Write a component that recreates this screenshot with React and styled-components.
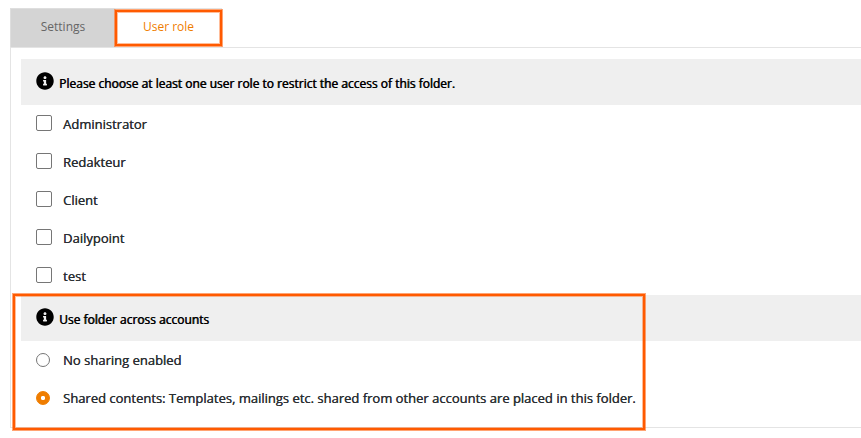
import styled, { createGlobalStyle } from 'styled-components';
import { FaInfoCircle } from 'react-icons/fa';

const roles = ['Administrator', 'Redakteur', 'Client', 'Dailypoint', 'test'];

const sharingOptions = [
  { label: 'No sharing enabled', checked: false },
  {
    label:
      'Shared contents: Templates, mailings etc. shared from other accounts are placed in this folder.',
    checked: true,
  },
];

function App() {
  return (
    <>
      <GlobalStyle />
      <StyledPage>
        <StyledTabs>
          <StyledTab>Settings</StyledTab>
          <StyledTab $active>
            User role
            <StyledTabMarker />
          </StyledTab>
        </StyledTabs>
        <StyledPanel>
          <StyledHeading>
            <FaInfoCircle size={18} />
            <StyledHeadingText>
              Please choose at least one user role to restrict the access of this folder.
            </StyledHeadingText>
          </StyledHeading>
          {roles.map((role) => (
            <StyledRow key={role}>
              <StyledCheckbox type="checkbox" />
              <StyledLabel>{role}</StyledLabel>
            </StyledRow>
          ))}
          <StyledSection>
            <StyledHeading>
              <FaInfoCircle size={18} />
              <StyledHeadingText>Use folder across accounts</StyledHeadingText>
            </StyledHeading>
            {sharingOptions.map(({ label, checked }) => (
              <StyledRow key={label}>
                <StyledRadio type="radio" name="sharing" defaultChecked={checked} />
                <StyledLabel>{label}</StyledLabel>
              </StyledRow>
            ))}
            <StyledSectionMarker />
          </StyledSection>
        </StyledPanel>
      </StyledPage>
    </>
  );
}

export default App;

const GlobalStyle = createGlobalStyle`
  * {
    box-sizing: border-box;
  }

  body {
    margin: 0;
    background: #fff;
    font-family: 'Open Sans', sans-serif;
  }
`;

const StyledPage = styled.main`
  min-height: 438px;
  padding: 8px 0 0 10px;
`;

const StyledTabs = styled.nav`
  display: flex;
  height: 39px;
`;

const StyledTab = styled.div`
  position: relative;
  width: ${(props) => (props.$active ? 107 : 105)}px;
  padding-left: ${(props) => (props.$active ? 0 : 1)}px;
  border: 1px solid ${(props) => (props.$active ? '#e4e4e4' : '#dedede')};
  border-bottom: 0;
  background: ${(props) => (props.$active ? '#fff' : '#d4d4d4')};
  color: ${(props) => (props.$active ? '#ef7d00' : '#666')};
  font-size: 12px;
  line-height: 36px;
  text-align: center;
`;

const StyledMarker = styled.div`
  position: absolute;
  border: 2px solid #ff5a00;
  box-shadow: 0 0 0 1px rgba(255, 90, 0, 0.55), inset 0 0 0 1px rgba(255, 90, 0, 0.4);
  pointer-events: none;
`;

const StyledTabMarker = styled(StyledMarker)`
  top: 1px;
  left: -1px;
  width: 107px;
  height: 36px;
`;

const StyledPanel = styled.section`
  height: 381px;
  padding: 11px 0 10px 10px;
  border: 1px solid #e4e4e4;
  border-right: 0;
`;

const StyledSection = styled.div`
  position: relative;
`;

const StyledSectionMarker = styled(StyledMarker)`
  top: -1px;
  left: -8px;
  width: 632px;
  height: 136px;
`;

const StyledHeading = styled.div`
  display: flex;
  align-items: center;
  height: 46px;
  padding: 0 15px 2px;
  background: #efefef;
  color: #000;
`;

const StyledHeadingText = styled.span`
  margin: 5px 0 0 5px;
  font-size: 12px;
  white-space: nowrap;
  text-shadow: 0.6px 0 0 #000;
`;

const StyledRow = styled.label`
  display: flex;
  align-items: center;
  height: 38px;
  padding-left: 15px;
`;

const StyledCheckbox = styled.input`
  appearance: none;
  width: 16px;
  height: 16px;
  margin: 0 11px 2px 0;
  border: 1px solid #767676;
  border-radius: 2px;
  background: #fff;
`;

const StyledRadio = styled.input`
  appearance: none;
  width: 14px;
  height: 14px;
  margin: 0 13px 0 0;
  border: 1px solid #767676;
  border-radius: 50%;
  background: #fff;

  &:checked {
    border-color: #ef7d00;
    background: radial-gradient(circle, #fff 1.8px, #ef7d00 2.5px);
  }
`;

const StyledLabel = styled.span`
  color: #2b2f33;
  font-size: 13px;
  white-space: nowrap;
  text-shadow: 0.3px 0 0 #2b2f33;
`;
